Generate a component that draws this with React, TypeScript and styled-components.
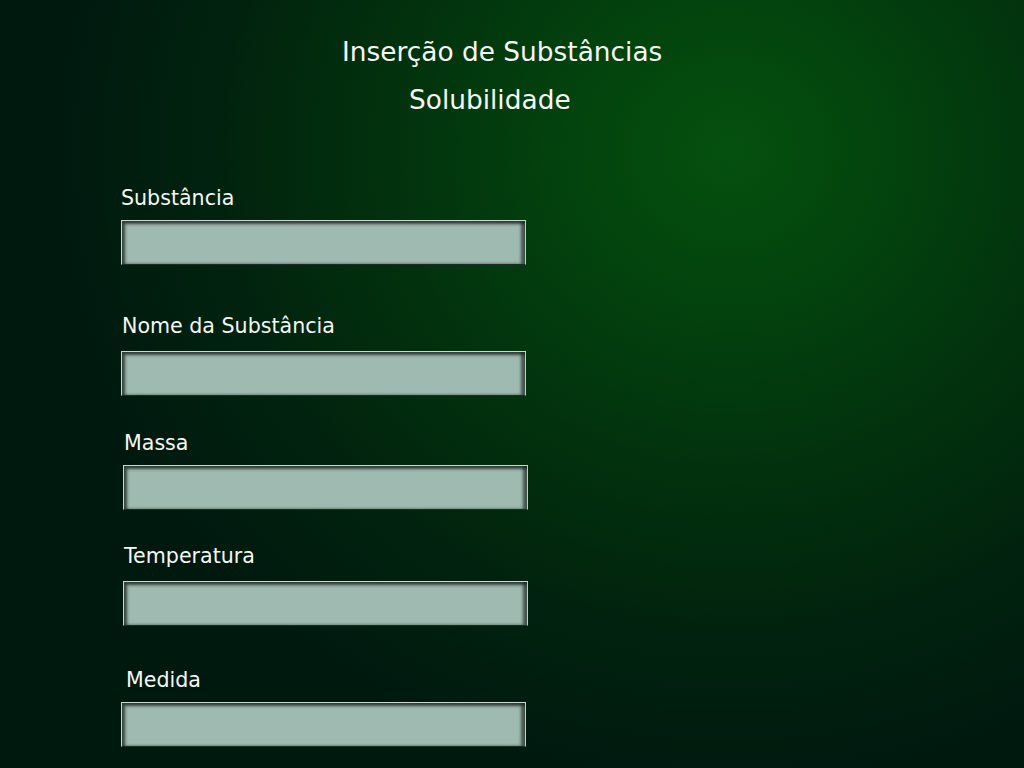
import React from "react";
import styled, { createGlobalStyle } from "styled-components";

const GlobalStyle = createGlobalStyle`
  html, body {
    margin: 0;
    padding: 0;
    background: #00180f;
  }
`;

const Page = styled.div`
  width: 1024px;
  height: 768px;
  overflow: hidden;
  box-sizing: border-box;
  padding-top: 36px;
  font-family: "DejaVu Sans", Verdana, sans-serif;
  color: #f4f7f4;
  background: radial-gradient(
    ellipse 680px 640px at 730px 150px,
    #05500f 0%,
    #03440d 22%,
    #02320d 50%,
    #01230e 75%,
    #00190f 100%
  );
`;

const Header = styled.header`
  display: flex;
  flex-direction: column;
  gap: 16px;
`;

const Title = styled.h1<{ $indent: number }>`
  margin: 0;
  padding-left: ${({ $indent }) => $indent}px;
  font-size: 26.4px;
  font-weight: normal;
  line-height: 32px;
  white-space: nowrap;
`;

const Form = styled.form`
  display: flex;
  flex-direction: column;
  margin-top: 70px;
`;

const Field = styled.div<{ $top: number; $labelGap: number; $shift: number }>`
  display: flex;
  flex-direction: column;
  gap: ${({ $labelGap }) => $labelGap}px;
  margin-top: ${({ $top }) => $top}px;
  padding-left: ${({ $shift }) => $shift}px;
`;

const Label = styled.label<{ $shift: number }>`
  padding-left: ${({ $shift }) => $shift}px;
  font-size: 20.6px;
  line-height: 24px;
  white-space: nowrap;
`;

const Input = styled.input`
  box-sizing: border-box;
  width: 405px;
  height: 45px;
  margin: 0;
  padding: 0 8px;
  border: 1px solid;
  border-color: #ccd9d2 #c0cec6 #1c2c24 #ccd9d2;
  background: #9fbab0;
  box-shadow:
    inset 3px 3px 3px rgba(20, 30, 26, 0.75),
    inset -4px 0 3px rgba(30, 40, 36, 0.7);
  outline: none;
  font-family: inherit;
  font-size: 16px;
`;

const fields = [
  { label: "Substância", top: 0, gap: 10, shift: 121, labelShift: 0 },
  { label: "Nome da Substância", top: 49, gap: 13, shift: 121, labelShift: 1 },
  { label: "Massa", top: 35, gap: 10, shift: 123, labelShift: 1 },
  { label: "Temperatura", top: 34, gap: 13, shift: 123, labelShift: 1 },
  { label: "Medida", top: 42, gap: 10, shift: 121, labelShift: 5 },
];

const App = (): React.ReactNode => {
  return (
    <Page>
      <GlobalStyle />
      <Header>
        <Title $indent={342}>Inserção de Substâncias</Title>
        <Title $indent={409}>Solubilidade</Title>
      </Header>
      <Form onSubmit={(e) => e.preventDefault()}>
        {fields.map((f, i) => (
          <Field key={f.label} $top={f.top} $labelGap={f.gap} $shift={f.shift}>
            <Label htmlFor={`campo-${i}`} $shift={f.labelShift}>
              {f.label}
            </Label>
            <Input id={`campo-${i}`} type="text" />
          </Field>
        ))}
      </Form>
    </Page>
  );
};

export default App;
